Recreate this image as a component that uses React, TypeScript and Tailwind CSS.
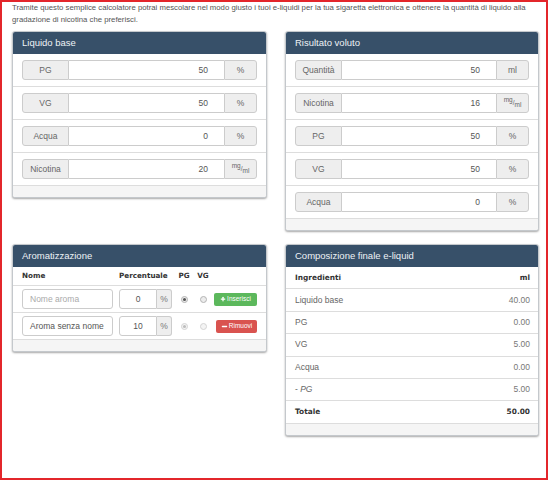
import { Plus, Minus } from "lucide-react";
import type { ReactNode } from "react";

function Panel({ title, children }: { title: string; children: ReactNode }) {
    return (
        <div className="overflow-hidden rounded-[3px] border border-[#c4c8cc] bg-white shadow-[0_1px_2px_rgba(0,0,0,0.35)]">
            <div className="flex h-[22px] items-center bg-[#375069] px-[9px] text-[9.5px] text-[#eef2f6]">
                {title}
            </div>
            {children}
            <div className="h-[11px] bg-[#f5f5f5]"></div>
        </div>
    );
}

function Unit({ u }: { u: string }) {
    if (u === "mg/ml") {
        return (
            <span className="text-[6.5px] leading-none">
                <span className="relative top-[-3px]">mg</span>/<span className="relative top-[2px]">ml</span>
            </span>
        );
    }
    return <>{u}</>;
}

function InputRow({ label, value, unit }: { label: string; value: string; unit: string }) {
    return (
        <div className="border-b border-[#dddddd] px-[9px] py-[6px]">
            <div className="flex h-[20px] text-[8.5px] text-[#666]">
                <span className="flex w-[47px] items-center justify-center rounded-l-[3px] border border-[#cccccc] bg-[#eeeeee]">
                    {label}
                </span>
                <span className="flex flex-1 items-center justify-end border-y border-[#cccccc] bg-white pr-[16px] text-[#555]">
                    {value}
                </span>
                <span className="flex w-[33px] items-center justify-center rounded-r-[3px] border border-[#cccccc] bg-[#eeeeee]">
                    <Unit u={unit} />
                </span>
            </div>
        </div>
    );
}

function Radio({ checked, faded }: { checked?: boolean; faded?: boolean }) {
    return (
        <span
            className={
                "flex h-[7px] w-[7px] items-center justify-center rounded-full border " +
                (faded ? "border-[#d4d4d4] bg-[#f4f4f4]" : "border-[#b4b4b4] bg-[#ececec]")
            }
        >
            {checked && (
                <span className={"h-[3px] w-[3px] rounded-full " + (faded ? "bg-[#bdbdbd]" : "bg-[#555]")}></span>
            )}
        </span>
    );
}

function AromaRow({
    name,
    placeholder,
    pct,
    active,
}: {
    name?: string;
    placeholder?: string;
    pct: string;
    active: boolean;
}) {
    return (
        <div className="flex items-center border-b border-[#dddddd] px-[9px] pt-[3px] pb-[3px]">
            <span className="flex h-[20px] w-[91px] items-center rounded-[3px] border border-[#cccccc] pl-[7px] text-[8.5px]">
                {name ? <span className="text-[#555]">{name}</span> : <span className="text-[#aaa]">{placeholder}</span>}
            </span>
            <span className="ml-[6px] flex h-[20px] w-[53px] text-[8.5px] text-[#555]">
                <span className="flex flex-1 items-center justify-center rounded-l-[3px] border border-[#cccccc]">{pct}</span>
                <span className="flex w-[15px] items-center justify-center rounded-r-[3px] border border-l-0 border-[#cccccc] bg-[#eeeeee] text-[#777]">
                    %
                </span>
            </span>
            <span className="flex w-[22px] justify-center pl-[2px]">
                <Radio checked faded={!active} />
            </span>
            <span className="flex w-[18px] justify-center">
                <Radio faded={!active} />
            </span>
            {active ? (
                <span className="ml-auto flex h-[13px] w-[43px] items-center justify-center gap-[1px] rounded-[2px] bg-[#5cb85c] text-[6.5px] text-white">
                    <Plus size={6} strokeWidth={5} />
                    Inserisci
                </span>
            ) : (
                <span className="ml-auto flex h-[13px] w-[41px] items-center justify-center gap-[1px] rounded-[2px] bg-[#d9534f] text-[6.5px] text-white">
                    <Minus size={7} strokeWidth={5} />
                    Rimuovi
                </span>
            )}
        </div>
    );
}

function ResultRow({ label, value, bold }: { label: ReactNode; value: string; bold?: boolean }) {
    return (
        <div
            className={
                "flex h-[22.4px] items-center justify-between border-b border-[#dddddd] pl-[9px] pr-[8px] " +
                (bold
                    ? "font-['DejaVu_Sans',Verdana,sans-serif] text-[7.4px] font-bold text-[#333]"
                    : "text-[8.5px] text-[#777]")
            }
        >
            <span className={bold ? "" : "text-[#666]"}>{label}</span>
            <span>{value}</span>
        </div>
    );
}

export default function App() {
    return (
        <div className="h-[480px] w-[548px] border-2 border-[#e3262b] bg-white px-[10px] font-['Liberation_Sans',Arial,sans-serif]">
            <p className="text-[7.75px] leading-[12px] text-[#555]">
                Tramite questo semplice calcolatore potrai mescolare nel modo giusto i tuoi e-liquidi per la tua sigaretta elettronica e ottenere la quantità di liquido alla
                <br />
                gradazione di nicotina che preferisci.
            </p>

            <div className="mt-[5px] grid grid-cols-[255px_254px] items-start gap-x-[18px] gap-y-[13px]">
                <Panel title="Liquido base">
                    <InputRow label="PG" value="50" unit="%" />
                    <InputRow label="VG" value="50" unit="%" />
                    <InputRow label="Acqua" value="0" unit="%" />
                    <InputRow label="Nicotina" value="20" unit="mg/ml" />
                </Panel>

                <Panel title="Risultato voluto">
                    <InputRow label="Quantità" value="50" unit="ml" />
                    <InputRow label="Nicotina" value="16" unit="mg/ml" />
                    <InputRow label="PG" value="50" unit="%" />
                    <InputRow label="VG" value="50" unit="%" />
                    <InputRow label="Acqua" value="0" unit="%" />
                </Panel>

                <Panel title="Aromatizzazione">
                    <div className="flex h-[19px] items-center border-b border-[#dddddd] px-[9px] font-['DejaVu_Sans',Verdana,sans-serif] text-[7.2px] font-bold text-[#333]">
                        <span className="w-[91px]">Nome</span>
                        <span className="ml-[6px] w-[53px]">Percentuale</span>
                        <span className="w-[22px] pl-[2px] text-center">PG</span>
                        <span className="w-[18px] text-center">VG</span>
                    </div>
                    <AromaRow placeholder="Nome aroma" pct="0" active />
                    <AromaRow name="Aroma senza nome" pct="10" active={false} />
                </Panel>

                <Panel title="Composizione finale e-liquid">
                    <ResultRow label="Ingredienti" value="ml" bold />
                    <ResultRow label="Liquido base" value="40.00" />
                    <ResultRow label="PG" value="0.00" />
                    <ResultRow label="VG" value="5.00" />
                    <ResultRow label="Acqua" value="0.00" />
                    <ResultRow
                        label={
                            <>
                                - <i>PG</i>
                            </>
                        }
                        value="5.00"
                    />
                    <ResultRow label="Totale" value="50.00" bold />
                </Panel>
            </div>
        </div>
    );
}
